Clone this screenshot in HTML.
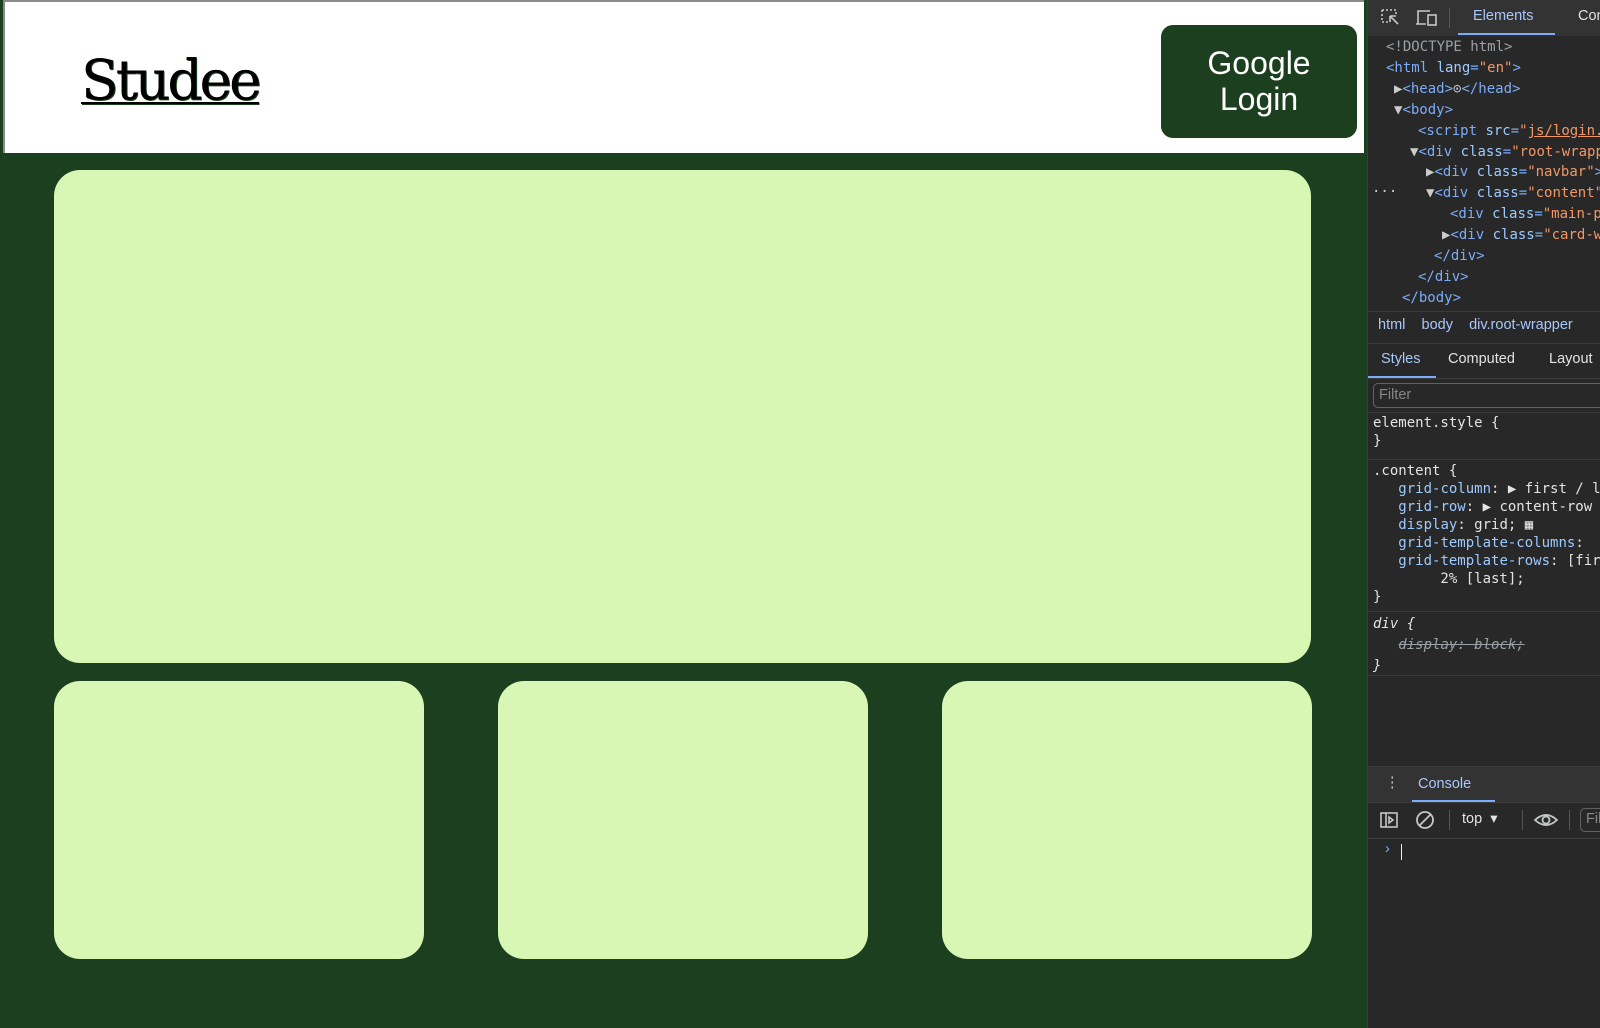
<!DOCTYPE html>
<html><head><style>
*{margin:0;padding:0;box-sizing:border-box}
body{width:1600px;height:1028px;background:#1c3f1f;position:relative;overflow:hidden;font-family:"Liberation Sans",sans-serif}
.nav{position:absolute;left:3px;top:0;width:1361px;height:153px;background:#fff;border-top:2px solid #8a8a8a;border-left:2px solid #8a8a8a}
.logo{position:absolute;left:76px;top:46px;font-family:"DejaVu Serif",serif;font-size:55px;letter-spacing:-3px;color:#000;text-decoration:underline;text-decoration-thickness:2px;text-underline-offset:3px;text-shadow:1px 1px 0 #1c3f1f,0.6px 0 0 #000}
.btn{position:absolute;left:1156px;top:23px;width:196px;height:113px;background:#1c3f1f;border-radius:12px;color:#fff;font-size:32px;text-align:center;line-height:36px;padding-top:20px}
.card{position:absolute;background:#d9f7b4;border-radius:26px}
.dt{position:absolute;left:1367px;top:0;width:233px;height:1028px;background:#282828;border-left:1px solid #3c3c3c;color:#e3e3e3;font-size:14px}
.m{position:absolute;font-family:"DejaVu Sans Mono","Liberation Mono",monospace;font-size:14px;white-space:nowrap;color:#9aa0a6}
.t{color:#7cacf8}.a{color:#9ccbff}.v{color:#f29766}
.s{position:absolute;white-space:nowrap;font-size:14.5px}
.line{position:absolute;left:0;width:233px;height:1px;background:#3c3c3c}
</style></head><body>
<div class="nav"><div class="logo">Studee</div><div class="btn">Google<br>Login</div></div>
<div class="card" style="left:54px;top:170px;width:1257px;height:493px"></div>
<div class="card" style="left:54px;top:681px;width:370px;height:278px"></div>
<div class="card" style="left:498px;top:681px;width:370px;height:278px"></div>
<div class="card" style="left:942px;top:681px;width:370px;height:278px"></div>
<div class="dt">
<div style="position:absolute;left:0;top:0;width:233px;height:36px;background:#333"></div>
<svg style="position:absolute;left:12px;top:8px" width="22" height="20" fill="none" stroke="#c4c7c5" stroke-width="1.6"><path d="M2 2h14v6M2 2v12h6" stroke-dasharray="2 2"/><path d="M10 8l8 8M10 8v6M10 8h6"/></svg>
<svg style="position:absolute;left:47px;top:8px" width="24" height="20" fill="none" stroke="#c4c7c5" stroke-width="1.6"><path d="M3 16V3h12M1 16h10"/><rect x="13" y="7" width="8" height="10"/></svg>
<div style="position:absolute;left:81px;top:8px;width:1px;height:20px;background:#555"></div>
<div class="s" style="left:105px;top:8px;color:#a8c7fa">Elements</div>
<div style="position:absolute;left:90px;top:33px;width:97px;height:2px;background:#7cacf8"></div>
<div class="s" style="left:210px;top:8px">Console</div>
<div class="m" style="left:18px;top:39px">&lt;!DOCTYPE html&gt;</div>
<div class="m t" style="left:18px;top:60px">&lt;html <span class="a">lang</span>=<span class="v">"en"</span>&gt;</div>
<div class="m t" style="left:26px;top:81px"><span style="color:#ccc">▶</span>&lt;head&gt;<span style="color:#ccc">⊙</span>&lt;/head&gt;</div>
<div class="m t" style="left:26px;top:102px"><span style="color:#ccc">▼</span>&lt;body&gt;</div>
<div class="m t" style="left:50px;top:123px">&lt;script <span class="a">src</span>=<span class="v">"<u>js/login.js</u>"</span></div>
<div class="m t" style="left:42px;top:144px"><span style="color:#ccc">▼</span>&lt;div <span class="a">class</span>=<span class="v">"root-wrapper"</span></div>
<div class="m t" style="left:58px;top:164px"><span style="color:#ccc">▶</span>&lt;div <span class="a">class</span>=<span class="v">"navbar"</span>&gt;</div>
<div class="m" style="left:4px;top:184px;color:#ccc">···</div>
<div class="m t" style="left:58px;top:185px"><span style="color:#ccc">▼</span>&lt;div <span class="a">class</span>=<span class="v">"content"</span></div>
<div class="m t" style="left:82px;top:206px">&lt;div <span class="a">class</span>=<span class="v">"main-panel"</span></div>
<div class="m t" style="left:74px;top:227px"><span style="color:#ccc">▶</span>&lt;div <span class="a">class</span>=<span class="v">"card-wrapper"</span></div>
<div class="m t" style="left:66px;top:248px">&lt;/div&gt;</div>
<div class="m t" style="left:50px;top:269px">&lt;/div&gt;</div>
<div class="m t" style="left:34px;top:290px">&lt;/body&gt;</div>
<div class="line" style="top:311px"></div>
<div class="s" style="left:10px;top:317px;color:#a8c7fa">html&nbsp;&nbsp;&nbsp; body&nbsp;&nbsp;&nbsp; div.root-wrapper</div>
<div class="line" style="top:343px"></div>
<div class="s" style="left:13px;top:351px;color:#a8c7fa">Styles</div>
<div class="s" style="left:80px;top:351px">Computed</div>
<div class="s" style="left:181px;top:351px">Layout</div>
<div style="position:absolute;left:0;top:376px;width:68px;height:2px;background:#7cacf8"></div>
<div class="line" style="top:378px"></div>
<div style="position:absolute;left:5px;top:383px;width:240px;height:25px;border:1px solid #5f6368;border-radius:5px"></div>
<div class="s" style="left:11px;top:387px;color:#888">Filter</div>
<div class="line" style="top:412px"></div>
<div class="m" style="left:5px;top:415px;color:#e3e3e3">element.style {<br><span style="line-height:21px">}</span></div>
<div class="line" style="top:459px"></div>
<div class="m" style="left:5px;top:462px;color:#e3e3e3;line-height:18px">.content {<br>&nbsp;&nbsp; <span class="a">grid-column</span>: ▶ first / last<br>&nbsp;&nbsp; <span class="a">grid-row</span>: ▶ content-row<br>&nbsp;&nbsp; <span class="a">display</span>: grid; ▦<br>&nbsp;&nbsp; <span class="a">grid-template-columns</span>:<br>&nbsp;&nbsp; <span class="a">grid-template-rows</span>: [first]<br>&nbsp;&nbsp;&nbsp;&nbsp;&nbsp;&nbsp;&nbsp; 2% [last];<br>}</div>
<div class="line" style="top:611px"></div>
<div class="m" style="left:5px;top:614px;color:#e3e3e3;line-height:21px;font-style:italic">div {<br>&nbsp;&nbsp; <s style="color:#9aa0a6">display: block;</s><br>}</div>
<div class="line" style="top:675px"></div>
<div style="position:absolute;left:0;top:766px;width:233px;height:36px;background:#333;border-top:1px solid #3c3c3c"></div>
<div class="s" style="left:17px;top:775px;color:#ccc">⋮</div>
<div class="s" style="left:50px;top:776px;color:#a8c7fa">Console</div>
<div style="position:absolute;left:44px;top:800px;width:83px;height:2px;background:#7cacf8"></div>
<div class="line" style="top:802px"></div>
<svg style="position:absolute;left:11px;top:810px" width="20" height="20" fill="none" stroke="#c4c7c5" stroke-width="1.6"><rect x="2" y="3" width="16" height="14"/><path d="M7 3v14M10 7l4 3-4 3z"/></svg>
<svg style="position:absolute;left:47px;top:810px" width="20" height="20" fill="none" stroke="#c4c7c5" stroke-width="1.8"><circle cx="10" cy="10" r="8"/><path d="M4 16L16 4"/></svg>
<div style="position:absolute;left:81px;top:810px;width:1px;height:20px;background:#555"></div>
<div class="s" style="left:94px;top:811px">top&nbsp; ▾</div>
<div style="position:absolute;left:154px;top:810px;width:1px;height:20px;background:#555"></div>
<svg style="position:absolute;left:165px;top:810px" width="26" height="20" fill="none" stroke="#c4c7c5" stroke-width="1.8"><path d="M2 10Q13 0 24 10Q13 20 2 10z"/><circle cx="13" cy="10" r="3.5"/></svg>
<div style="position:absolute;left:201px;top:810px;width:1px;height:20px;background:#555"></div>
<div style="position:absolute;left:212px;top:808px;width:30px;height:24px;border:1px solid #5f6368;border-radius:5px"></div>
<div class="s" style="left:218px;top:811px;color:#888">Fil</div>
<div class="line" style="top:838px"></div>
<div class="s" style="left:17px;top:841px;color:#7cacf8">›</div>
<div style="position:absolute;left:33px;top:844px;width:1px;height:16px;background:#eee"></div>
</div>
</body></html>
